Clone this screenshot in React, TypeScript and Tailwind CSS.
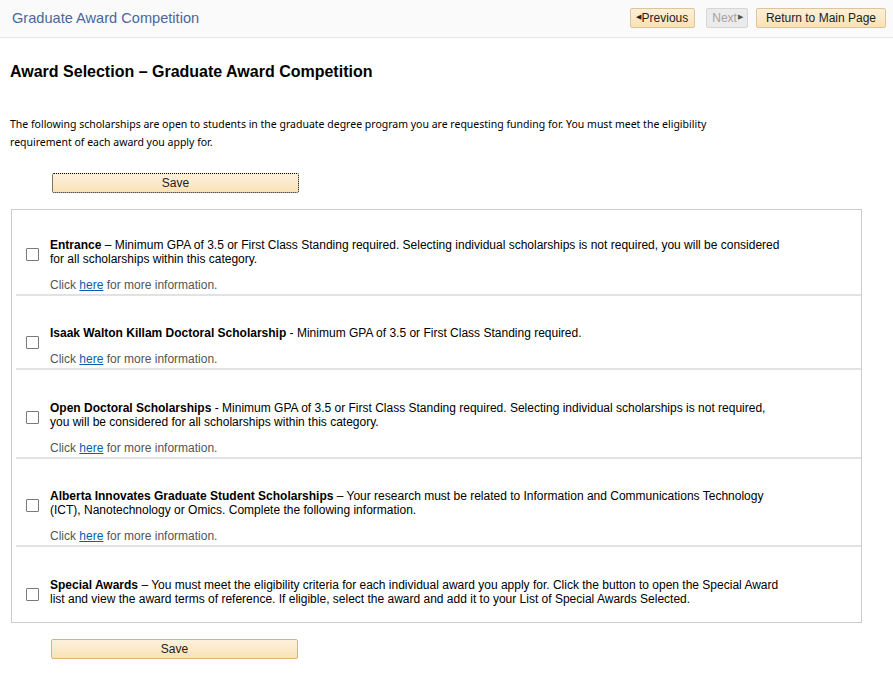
import React from 'react';

type Award = {
  title: string;
  sep: string;
  body: string;
  link: boolean;
  pt: string;
};

const awards: Award[] = [
  {
    title: 'Entrance',
    sep: ' – ',
    body: 'Minimum GPA of 3.5 or First Class Standing required. Selecting individual scholarships is not required, you will be considered for all scholarships within this category.',
    link: true,
    pt: 'pt-[28px]',
  },
  {
    title: 'Isaak Walton Killam Doctoral Scholarship',
    sep: ' - ',
    body: 'Minimum GPA of 3.5 or First Class Standing required.',
    link: true,
    pt: 'pt-[30px]',
  },
  {
    title: 'Open Doctoral Scholarships',
    sep: ' - ',
    body: 'Minimum GPA of 3.5 or First Class Standing required. Selecting individual scholarships is not required, you will be considered for all scholarships within this category.',
    link: true,
    pt: 'pt-[31px]',
  },
  {
    title: 'Alberta Innovates Graduate Student Scholarships',
    sep: ' – ',
    body: 'Your research must be related to Information and Communications Technology (ICT), Nanotechnology or Omics. Complete the following information.',
    link: true,
    pt: 'pt-[30px]',
  },
  {
    title: 'Special Awards',
    sep: ' – ',
    body: 'You must meet the eligibility criteria for each individual award you apply for. Click the button to open the Special Award list and view the award terms of reference. If eligible, select the award and add it to your List of Special Awards Selected.',
    link: false,
    pt: 'pt-[31px]',
  },
];

const AwardRow: React.FC<{ award: Award; last: boolean }> = ({ award, last }) => {
  return (
    <div className={`${award.pt} ${last ? 'pb-[16px]' : 'pb-[2px] border-b-2 border-[#e2e2e2] ml-[4px]'}`}>
      <div className={`flex ${last ? '' : '-ml-[4px]'}`}>
        <div className="w-[38px] shrink-0 pl-[14px]">
          <div className="mt-[10px] w-[13px] h-[13px] border border-[#7a7a7a] bg-white rounded-[1px]" />
        </div>
        <div className="w-[735px] text-[12px] leading-[14px] text-black">
          <span className="font-bold">{award.title}</span>
          {award.sep}
          {award.body}
          {award.link && (
            <div className="mt-[12px] text-[#555]">
              Click <a className="text-[#0b5cad] underline">here</a> for more information.
            </div>
          )}
        </div>
      </div>
    </div>
  );
};

const SaveButton: React.FC<{ focused?: boolean }> = ({ focused }) => (
  <button
    className={`w-[247px] h-[20px] text-[12px] leading-[18px] text-[#222] bg-gradient-to-b from-[#fdf1dc] to-[#fbe2b6] rounded-[2px] ${
      focused ? 'border border-dotted border-black' : 'border border-[#dbb27c]'
    }`}
  >
    Save
  </button>
);

export default function App() {
  return (
    <div className="w-[893px] min-h-[692px] bg-white" style={{ fontFamily: '"Liberation Sans", Arial, sans-serif' }}>
      <div className="h-[38px] bg-[#fafafa] border-b border-[#e6e6e6] flex items-center justify-between pl-[12px] pr-[7px]">
        <div className="text-[14.6px] text-[#4a6899]">Graduate Award Competition</div>
        <div className="flex items-center -mt-[2px]">
          <button className="h-[20px] pl-[5px] pr-[6px] text-[12px] text-[#222] bg-gradient-to-b from-[#fdf0d8] to-[#fbe1b3] border border-[#dcc49c] rounded-[2px] flex items-center">
            <span className="text-[7px] mr-[1px]">◀</span>Previous
          </button>
          <button className="ml-[11px] h-[20px] pl-[5px] pr-[4px] text-[12px] text-[#a4a4a4] bg-[#ebebeb] border border-[#d6d6d6] rounded-[2px] flex items-center">
            Next<span className="text-[7px] ml-[1px] text-[#555]">▶</span>
          </button>
          <button className="ml-[8px] h-[20px] px-[9px] text-[12px] text-[#222] bg-gradient-to-b from-[#fdf0d8] to-[#fbe1b3] border border-[#dcc49c] rounded-[2px]">
            Return to Main Page
          </button>
        </div>
      </div>

      <h1 className="mt-[24px] ml-[10px] text-[16px] leading-[20px] font-bold text-black">
        Award Selection – Graduate Award Competition
      </h1>

      <p
        className="mt-[33px] ml-[10px] text-[10.5px] leading-[18px] text-black"
        style={{ fontFamily: '"Noto Sans", "Open Sans", sans-serif' }}
      >
        The following scholarships are open to students in the graduate degree program you are requesting funding for. You must meet the eligibility
        <br />
        requirement of each award you apply for.
      </p>

      <div className="mt-[19px] ml-[52px]">
        <SaveButton focused />
      </div>

      <div className="mt-[15px] ml-[11px] w-[851px] border border-[#cccccc]">
        {awards.map((a, i) => (
          <AwardRow key={a.title} award={a} last={i === awards.length - 1} />
        ))}
      </div>

      <div className="mt-[13px] ml-[51px]">
        <SaveButton />
      </div>
    </div>
  );
}
